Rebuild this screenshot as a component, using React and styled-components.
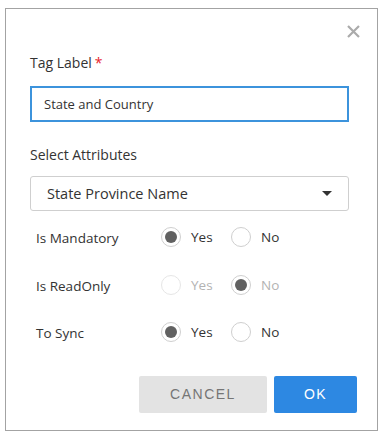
import { Fragment } from "react";
import styled, { createGlobalStyle } from "styled-components";

const GlobalStyle = createGlobalStyle`
  html, body {
    margin: 0;
    padding: 0;
    background: #ffffff;
  }
  body {
    font-family: "Open Sans", "Noto Sans", sans-serif;
    color: #333333;
  }
`

const Page = styled.div`
  padding: 8px 13px 7px 5px;
`

const Dialog = styled.div`
  position: relative;
  width: 373px;
  height: 423px;
  box-sizing: border-box;
  border: 1px solid #a3a3a3;
  padding: 44px 28px 0 24px;
`

const CloseButton = styled.button`
  position: absolute;
  top: 12px;
  right: 14px;
  width: 20px;
  height: 20px;
  padding: 0;
  border: none;
  background: transparent;
  cursor: pointer;
  display: flex;
  align-items: center;
  justify-content: center;
`

const FieldLabel = styled.div`
  font-size: 14px;
  line-height: 20px;
  color: #333;
  margin-bottom: ${p => p.gap || 12}px;
`

const Required = styled.span`
  color: #e8232a;
  margin-left: 3px;
`

const TextInput = styled.div`
  height: 36px;
  box-sizing: border-box;
  border: 2px solid #3c93dc;
  padding: 0 12px;
  display: flex;
  align-items: center;
  font-size: 13px;
  color: #333;
  margin-bottom: 23px;
`

const Select = styled.div`
  height: 35px;
  box-sizing: border-box;
  border: 1px solid #cfcfcf;
  border-radius: 3px;
  padding: 0 16px;
  display: flex;
  align-items: center;
  justify-content: space-between;
  font-size: 14.5px;
  color: #333;
`

const Caret = styled.span`
  width: 0;
  height: 0;
  border-left: 5px solid transparent;
  border-right: 5px solid transparent;
  border-top: 5px solid #333;
`

const Options = styled.div`
  padding: 16px 0 0 6px;
  display: grid;
  grid-template-columns: 125px auto;
  grid-auto-rows: 47.5px;
  align-items: start;
`

const RowLabel = styled.div`
  font-size: 13.5px;
  line-height: 22px;
  color: #333;
`

const RadioGroup = styled.div`
  display: flex;
  align-items: center;
  gap: 10px;
`

const RadioItem = styled.div`
  display: flex;
  align-items: center;
  gap: 10px;
  font-size: 13.5px;
  color: ${p => (p.disabled ? "#b3b3b3" : "#333")};
  min-width: 60px;
`

const Circle = styled.span`
  width: 20px;
  height: 20px;
  box-sizing: border-box;
  border-radius: 50%;
  border: 1px solid ${p => (p.disabled && !p.checked ? "#e6e6e6" : "#cfcfcf")};
  display: flex;
  align-items: center;
  justify-content: center;
  &::after {
    content: "";
    display: ${p => (p.checked ? "block" : "none")};
    width: 12px;
    height: 12px;
    border-radius: 50%;
    background: #616161;
  }
`

const Footer = styled.div`
  display: flex;
  justify-content: flex-end;
  gap: 7px;
  margin: 6px -8px 0 0;
`

const Button = styled.button`
  height: 37px;
  border: none;
  border-radius: 2px;
  font-family: "Liberation Sans", Arial, sans-serif;
  font-size: 14px;
  letter-spacing: 1.5px;
  cursor: pointer;
  background: ${p => (p.primary ? "#2d88e2" : "#e3e3e3")};
  color: ${p => (p.primary ? "#ffffff" : "#757575")};
  width: ${p => (p.primary ? 83 : 128)}px;
`

const rows = [
  { label: "Is Mandatory", value: "yes" },
  { label: "Is ReadOnly", value: "no", disabled: true },
  { label: "To Sync", value: "yes" },
]

export default function App() {
  return (
    <>
      <GlobalStyle />
      <Page>
        <Dialog>
          <CloseButton aria-label="close">
            <svg width="13" height="13" viewBox="0 0 13 13">
              <path d="M1 1L12 12M12 1L1 12" stroke="#ababab" strokeWidth="2.2" />
            </svg>
          </CloseButton>

          <FieldLabel gap={13}>
            Tag Label<Required>*</Required>
          </FieldLabel>
          <TextInput>State and Country</TextInput>

          <FieldLabel gap={11}>Select Attributes</FieldLabel>
          <Select>
            State Province Name
            <Caret />
          </Select>

          <Options>
            {rows.map(row => (
              <Fragment key={row.label}>
                <RowLabel>{row.label}</RowLabel>
                <RadioGroup>
                  <RadioItem disabled={row.disabled}>
                    <Circle checked={row.value === "yes"} disabled={row.disabled} />
                    Yes
                  </RadioItem>
                  <RadioItem disabled={row.disabled}>
                    <Circle checked={row.value === "no"} disabled={row.disabled} />
                    No
                  </RadioItem>
                </RadioGroup>
              </Fragment>
            ))}
          </Options>

          <Footer>
            <Button>CANCEL</Button>
            <Button primary>OK</Button>
          </Footer>
        </Dialog>
      </Page>
    </>
  )
}
